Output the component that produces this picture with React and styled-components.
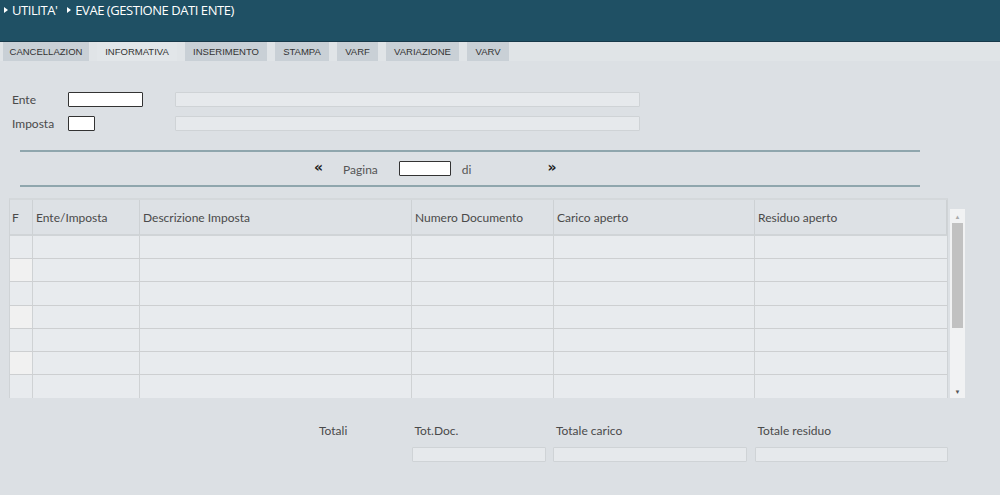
import React from "react";
import styled, { createGlobalStyle } from "styled-components";

const GlobalStyle = createGlobalStyle`
  html, body {
    margin: 0;
    padding: 0;
    background: #dce0e4;
    font-family: "Lato", "Open Sans", sans-serif;
  }
  * { box-sizing: border-box; }
`;

const tabs = [
  { label: "CANCELLAZION", w: 86 },
  { label: "INFORMATIVA", w: 80 },
  { label: "INSERIMENTO", w: 82 },
  { label: "STAMPA", w: 54 },
  { label: "VARF", w: 41 },
  { label: "VARIAZIONE", w: 73 },
  { label: "VARV", w: 42 },
];
const columns = ["F", "Ente/Imposta", "Descrizione Imposta", "Numero Documento", "Carico aperto", "Residuo aperto"];
const colTemplate = "23px 107px 272px 142px 201px 192px";
const rows = [0, 1, 2, 3, 4, 5, 6];

function App() {
  return (
    <Page>
      <GlobalStyle />
      <Header>
        <Crumb>UTILITA'</Crumb>
        <Crumb>EVAE (GESTIONE DATI ENTE)</Crumb>
      </Header>
      <TabBar>
        {tabs.map((t) => (
          <Tab key={t.label} $w={t.w} $active={t.label === "INFORMATIVA"}>{t.label}</Tab>
        ))}
      </TabBar>

      <Form>
        <FieldRow>
          <Label>Ente</Label>
          <Input $w={75} />
          <ReadOnly />
        </FieldRow>
        <FieldRow>
          <Label>Imposta</Label>
          <Input $w={27} />
          <ReadOnly />
        </FieldRow>
      </Form>

      <Pager>
        <Arrow>«</Arrow>
        <PagerText>Pagina</PagerText>
        <Input $w={52} />
        <PagerText $di>di</PagerText>
        <Arrow>»</Arrow>
      </Pager>

      <TableWrap>
        <Grid>
          {columns.map((c) => (
            <HeadCell key={c}>{c}</HeadCell>
          ))}
          {rows.map((r) =>
            columns.map((c, i) => (
              <Cell key={r + c} $flag={i === 0 && r % 2 === 1} $last={r === rows.length - 1} />
            ))
          )}
        </Grid>
        <Scrollbar>
          <ScrollArrow>▲</ScrollArrow>
          <Thumb />
          <ScrollSpace />
          <ScrollArrow $down>▼</ScrollArrow>
        </Scrollbar>
      </TableWrap>

      <Totals>
        <TotLabel $first>Totali</TotLabel>
        <TotLabel>Tot.Doc.</TotLabel>
        <TotLabel>Totale carico</TotLabel>
        <TotLabel>Totale residuo</TotLabel>
        <span />
        <TotField />
        <TotField />
        <TotField />
      </Totals>
    </Page>
  );
}

const Page = styled.div`
  width: 1000px;
  height: 495px;
  overflow: hidden;
  background: #dce0e4;
  color: #4a4a4a;
`;

const Header = styled.div`
  height: 42px;
  background: #1f5064;
  border-bottom: 1px solid #17394a;
  display: flex;
  align-items: flex-start;
  gap: 10px;
  padding: 1px 4px;
`;

const Crumb = styled.span`
  color: #ffffff;
  font-family: "Open Sans", sans-serif;
  font-size: 13px;
  letter-spacing: -0.45px;
  display: flex;
  align-items: center;
  &::before {
    content: "";
    border-left: 4px solid #fff;
    border-top: 3px solid transparent;
    border-bottom: 3px solid transparent;
    margin-right: 4px;
  }
`;

const TabBar = styled.div`
  display: flex;
  gap: 8px;
  height: 19px;
  padding-left: 3px;
  background: #e0e4e7;
`;

const Tab = styled.div`
  width: ${(p) => p.$w}px;
  display: flex;
  align-items: center;
  justify-content: center;
  font-family: "Liberation Sans", Arial, sans-serif;
  font-size: 9.5px;
  color: #333;
  background: ${(p) => (p.$active ? "#e2e6e9" : "#c9d0d6")};
`;

const Form = styled.div`
  display: flex;
  flex-direction: column;
  gap: 9px;
  padding: 31px 0 0 12px;
`;

const FieldRow = styled.div`
  display: flex;
  align-items: center;
  height: 15px;
`;

const Label = styled.span`
  width: 56px;
  font-size: 12px;
  color: #4a4a4a;
`;

const Input = styled.div`
  width: ${(p) => p.$w}px;
  height: 15px;
  background: #fff;
  border: 1px solid #333;
  border-radius: 1px;
`;

const ReadOnly = styled.div`
  width: 465px;
  height: 15px;
  margin-left: auto;
  margin-right: 360px;
  background: #e6e9ec;
  border: 1px solid #cfd3d6;
  border-radius: 1px;
`;

const Pager = styled.div`
  margin: 19px 0 0 20px;
  width: 900px;
  height: 37px;
  border-top: 2px solid #8fa6ad;
  border-bottom: 2px solid #8fa6ad;
  display: flex;
  align-items: center;
  padding-left: 294px;
`;

const Arrow = styled.span`
  font-family: "DejaVu Sans", sans-serif;
  font-weight: bold;
  font-size: 14px;
  color: #222;
  margin-top: -3px;
`;

const PagerText = styled.span`
  font-size: 12px;
  color: #555;
  margin: ${(p) => (p.$di ? "2px 76px 0 11px" : "2px 21px 0 20px")};
`;

const TableWrap = styled.div`
  display: flex;
  margin: 11px 0 0 9px;
  align-items: flex-end;
`;

const Grid = styled.div`
  display: grid;
  grid-template-columns: ${colTemplate};
  grid-template-rows: 36px;
  grid-auto-rows: 23.2px;
  border-left: 1px solid #cfd3d6;
  border-right: 1px solid #cfd3d6;
  border-top: 2px solid #d4d8db;
`;

const HeadCell = styled.div`
  background: #dde1e5;
  border-right: 1px solid #cdd1d4;
  border-bottom: 2px solid #d0d4d7;
  display: flex;
  align-items: center;
  padding-left: 3px;
  font-size: 12px;
  color: #4a4a4a;
  &:first-child { padding-left: 2px; }
  &:last-child { border-right: none; }
`;

const Cell = styled.div`
  background: ${(p) => (p.$flag ? "#f1f1f1" : "#e8ebee")};
  border-right: 1px solid #cfd2d4;
  border-bottom: ${(p) => (p.$last ? "none" : "1px solid #cdcfd1")};
  &:nth-child(6n) { border-right: none; }
`;

const Scrollbar = styled.div`
  width: 15px;
  height: 189px;
  margin-left: 2px;
  background: #f1f2f3;
  display: flex;
  flex-direction: column;
  align-items: center;
  padding: 0 1px;
`;

const ScrollArrow = styled.div`
  font-size: 6px;
  color: ${(p) => (p.$down ? "#555" : "#aaa")};
  height: 14px;
  display: flex;
  align-items: center;
  justify-content: center;
`;

const Thumb = styled.div`
  width: 11px;
  height: 105px;
  background: #c1c1c1;
`;

const ScrollSpace = styled.div`
  flex: 1;
`;

const Totals = styled.div`
  display: grid;
  grid-template-columns: 395px 134px 194px 193px;
  column-gap: 7.5px;
  row-gap: 9px;
  margin: 25px 0 0 9px;
`;

const TotLabel = styled.span`
  font-size: 12px;
  color: #4a4a4a;
  padding-left: ${(p) => (p.$first ? "310px" : "3px")};
  height: 15px;
  line-height: 15px;
`;

const TotField = styled.div`
  height: 15px;
  background: #e6e9ec;
  border: 1px solid #cfd3d6;
  border-radius: 1px;
`;

export default App;
